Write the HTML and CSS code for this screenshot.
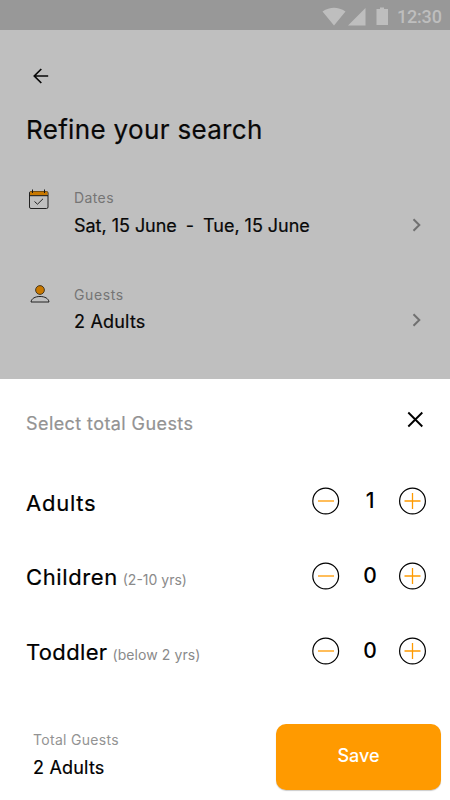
FILE: index.html
```html
<!DOCTYPE html>
<html lang="en">
<head>
<meta charset="utf-8">
<title>Refine your search</title>
<link rel="stylesheet" href="styles.css">
</head>
<body>
<div class="screen">
  <header class="status">
    <svg width="82" height="30" viewBox="320 0 82 30" fill="#bebebe"><path d="M322.500 11.500Q334 4 345.500 11.500L334 25.500ZM348 25.500L365.500 8V25.500ZM376.500 9H380V7.500H384V9H388V25H376.500Z"/></svg>
    <span class="clock">12:30</span>
  </header>
  <main class="search">
    <svg class="back" width="18" height="18" viewBox="0 0 18 18" fill="none" stroke="#080808" stroke-width="1.700"><path d="M16.200 9H2.500M9.300 2L2.300 9L9.300 16"/></svg>
    <h1>Refine your search</h1>
    <section class="field dates">
      <svg class="icon" width="24" height="24" viewBox="27 187 24 24"><rect x="29.500" y="191.500" width="18.500" height="17" rx="1.500" fill="none" stroke="#222" stroke-width="1"/><path d="M30 191.500H47.500V195.500H30Z" fill="#c87800"/><path d="M29.500 195.700H48M32.500 189.500V193M44.500 189.500V193" stroke="#161616" fill="none"/><path d="M34.500 201.500L37.500 204.200L43 198.800" stroke="#222" fill="none"/></svg>
      <div class="text"><span class="label">Dates</span><span class="value date-value"><span>Sat, 15 June</span><span>-</span><span>Tue, 15 June</span></span></div>
      <svg class="chevron" width="12" height="16" viewBox="0 0 12 16" fill="none" stroke="#707070" stroke-width="2"><path d="M2.500 2.300L8.300 8L2.500 13.700"/></svg>
    </section>
    <section class="field guests">
      <svg class="icon" width="24" height="24" viewBox="27 283 24 24"><circle cx="40" cy="290" r="4.400" fill="#c87800" stroke="#2a210f" stroke-width=".8"/><path d="M31 302C31.500 298.500 35 296.500 40 296.500S48.500 298.500 49 302Z" fill="none" stroke="#222" stroke-width="1"/></svg>
      <div class="text"><span class="label">Guests</span><span class="value adults-value">2 Adults</span></div>
      <svg class="chevron" width="12" height="16" viewBox="0 0 12 16" fill="none" stroke="#707070" stroke-width="2"><path d="M2.500 2.300L8.300 8L2.500 13.700"/></svg>
    </section>
  </main>
  <section class="sheet">
    <div class="sheet-head">
      <h2>Select total Guests</h2>
      <svg width="18" height="18" viewBox="0 0 18 18" stroke="#000" stroke-width="1.900"><path d="M2.300 1.500L16.300 15.500M16.300 1.500L2.300 15.500"/></svg>
    </div>
    <div class="row">
      <span class="name n-adults">Adults</span>
      <div class="stepper">
        <svg width="28" height="28" viewBox="0 0 28 28" fill="none"><circle cx="13.700" cy="14" r="12.900" stroke="#000" stroke-width="1.200"/><path d="M6 14H22" stroke="#ff9a00" stroke-width="1.300"/></svg>
        <span class="count">1</span>
        <svg width="28" height="28" viewBox="0 0 28 28" fill="none"><circle cx="13.500" cy="14" r="12.900" stroke="#000" stroke-width="1.200"/><path d="M5.500 14H21.500M13.500 6V22" stroke="#ff9a00" stroke-width="1.300"/></svg>
      </div>
    </div>
    <div class="row">
      <span class="name n-children">Children</span><span class="age a-children">(2-10 yrs)</span>
      <div class="stepper">
        <svg width="28" height="28" viewBox="0 0 28 28" fill="none"><circle cx="13.700" cy="14" r="12.900" stroke="#000" stroke-width="1.200"/><path d="M6 14H22" stroke="#ff9a00" stroke-width="1.300"/></svg>
        <span class="count">0</span>
        <svg width="28" height="28" viewBox="0 0 28 28" fill="none"><circle cx="13.500" cy="14" r="12.900" stroke="#000" stroke-width="1.200"/><path d="M5.500 14H21.500M13.500 6V22" stroke="#ff9a00" stroke-width="1.300"/></svg>
      </div>
    </div>
    <div class="row">
      <span class="name n-toddler">Toddler</span><span class="age a-toddler">(below 2 yrs)</span>
      <div class="stepper">
        <svg width="28" height="28" viewBox="0 0 28 28" fill="none"><circle cx="13.700" cy="14" r="12.900" stroke="#000" stroke-width="1.200"/><path d="M6 14H22" stroke="#ff9a00" stroke-width="1.300"/></svg>
        <span class="count">0</span>
        <svg width="28" height="28" viewBox="0 0 28 28" fill="none"><circle cx="13.500" cy="14" r="12.900" stroke="#000" stroke-width="1.200"/><path d="M5.500 14H21.500M13.500 6V22" stroke="#ff9a00" stroke-width="1.300"/></svg>
      </div>
    </div>
    <footer>
      <div class="total"><span class="label">Total Guests</span><span class="value adults-value">2 Adults</span></div>
      <button type="button">Save</button>
    </footer>
  </section>
</div>
</body>
</html>
```
FILE: styles.css
```css
* { box-sizing: border-box; }
body { margin: 0; font-family: Inter, "Liberation Sans", sans-serif; color: #000; }
svg { display: block; flex: none; }
h1, h2 { margin: 0; }
.screen { width: 450px; height: 800px; overflow: hidden; background: #bfbfbf; }
.status { height: 30px; padding-left: 320px; display: flex; align-items: center; background: #989898; }
.clock { font: 500 18px/30px Roboto, sans-serif; letter-spacing: -.2px; color: #bebebe; margin: 4px 0 0 -5px; white-space: nowrap; }
.search { height: 349px; padding: 37px 0 0 26px; color: #080808; }
.back { margin-left: 6px; }
h1 { margin-top: 28px; font-size: 26px; font-weight: 400; line-height: 34px; letter-spacing: .33px; white-space: nowrap; }
h1, h2, .value, .name { -webkit-text-stroke: .2px currentColor; }
.field { display: flex; height: 56px; padding-right: 27px; }
.dates { margin-top: 40px; }
.guests { margin-top: 40px; }
.icon { margin-left: 1px; }
.text { margin-left: 23px; flex: 1; display: flex; flex-direction: column; }
.label { font-size: 14px; line-height: 22px; letter-spacing: .4px; color: #757575; white-space: nowrap; }
.guests .label { padding-top: 1px; letter-spacing: .6px; }
.value { font-size: 18px; line-height: 32px; white-space: nowrap; }
.dates .value { padding-top: 1px; }
.adults-value { letter-spacing: .2px; }
.date-value { display: flex; gap: 9px; letter-spacing: -.03px; }
.chevron { margin-top: 30px; }
.guests .chevron { margin-top: 29px; }
.sheet { height: 421px; padding-top: 24px; background: #fff; }
.sheet-head { height: 40px; padding: 0 26px; display: flex; justify-content: space-between; }
h2 { font-size: 18px; font-weight: 400; line-height: 42px; letter-spacing: .42px; color: #939393; white-space: nowrap; }
.sheet-head svg { margin-top: 8px; }
.row { height: 75px; padding: 0 23px 0 26px; display: flex; align-items: center; }
.sheet-head + .row { margin-top: 21px; }
.name { font-size: 22px; line-height: 32px; white-space: nowrap; }
.n-adults { padding-top: 2px; letter-spacing: .75px; }
.n-children { letter-spacing: .6px; }
.n-toddler { letter-spacing: .35px; }
.age { font-size: 14px; line-height: 32px; margin: 6px 0 0 5px; color: #8a8a8a; white-space: nowrap; }
.a-toddler { letter-spacing: .08px; }
.stepper { margin: -2px 0 0 auto; display: flex; align-items: center; }
.count { width: 59px; padding: 1px 0 0 1px; text-align: center; font-size: 21px; line-height: 32px; font-weight: 500; }
footer { padding: 35px 9px 0 33px; display: flex; justify-content: space-between; }
.total { display: flex; flex-direction: column; padding-top: 5px; }
.total .label { color: #939393; letter-spacing: .3px; }
.total .value { padding-top: 1px; }
button { width: 165px; height: 66px; border: 0; border-radius: 10px; background: #ff9a00; color: #fff; font: 500 18px/64px Inter, sans-serif; padding: 0 0 2px; box-shadow: 0 1px 1px #ccc; }
```
